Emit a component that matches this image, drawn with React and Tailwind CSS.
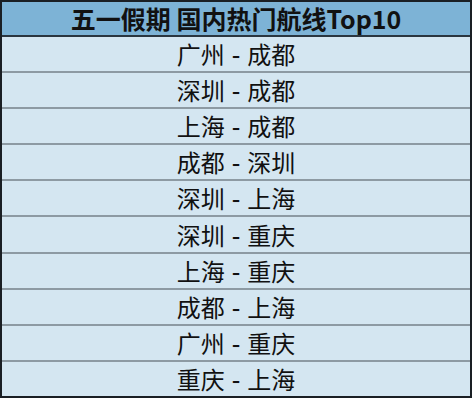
export default function App() {
  const rows = [
    ["广州", "成都"],
    ["深圳", "成都"],
    ["上海", "成都"],
    ["成都", "深圳"],
    ["深圳", "上海"],
    ["深圳", "重庆"],
    ["上海", "重庆"],
    ["成都", "上海"],
    ["广州", "重庆"],
    ["重庆", "上海"],
  ];
  return (
    <div className="w-[474px] h-[401px] bg-white" style={{ fontFamily: '"Noto Sans CJK SC", "Noto Sans", sans-serif' }}>
      <div className="w-[472px] h-[398px] border-2 border-[#1a1f24] flex flex-col bg-[#d4e6f1]">
        <div className="h-[35px] bg-[#7db3d6] border-b-2 border-[#2a3640] flex items-center justify-center text-[25px] font-bold text-[#111] leading-none shrink-0">
          五一假期 国内热门航线Top10
        </div>
        {rows.map((r, i) => (
          <div
            key={i}
            className={`flex-1 flex items-center justify-center gap-[7px] text-[24px] text-[#111] leading-none ${i < rows.length - 1 ? "border-b-2 border-[#8d9aa3]" : ""}`}
          >
            <span>{r[0]}</span>
            <span className="font-medium">-</span>
            <span>{r[1]}</span>
          </div>
        ))}
      </div>
    </div>
  );
}
